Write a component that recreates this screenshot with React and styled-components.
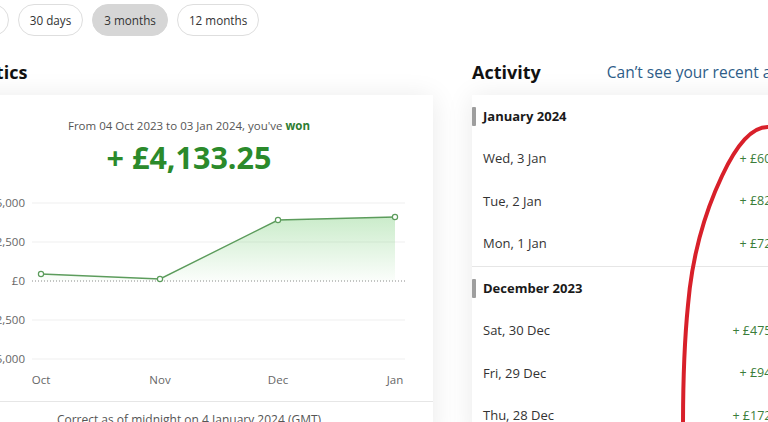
import React from "react";
import styled, { createGlobalStyle } from "styled-components";

const Global = createGlobalStyle`
  html, body { margin: 0; padding: 0; background: #ffffff; overflow: hidden; }
  body { font-family: "Open Sans", "Noto Sans", Arial, sans-serif; color: #222; }
`;

const Page = styled.div`
  margin-left: -55px;
  padding-top: 4px;
  width: 1100px;
`;

const FilterRow = styled.div`
  display: flex;
  gap: 9px;
  margin-left: 5px;
`;

const Pill = styled.button`
  height: 32px;
  padding: 0 11px;
  border-radius: 16px;
  border: 1px solid ${(p) => (p.$active ? "#d6d6d6" : "#dedede")};
  background: ${(p) => (p.$active ? "#d6d6d6" : "#ffffff")};
  font-family: inherit;
  font-size: 11.7px;
  color: #333;
`;

const Columns = styled.div`
  display: flex;
  gap: 39px;
  margin-top: 24px;
`;

const Column = styled.div`
  width: ${(p) => p.$w}px;
  flex: none;
`;

const HeadRow = styled.div`
  display: flex;
  align-items: center;
  height: 24px;
  margin-bottom: 11px;
  gap: 66px;
`;

const Heading = styled.h2`
  margin: 0;
  font-size: 18px;
  font-weight: 700;
  color: #111;
  line-height: 24px;
`;

const Link = styled.a`
  font-size: 15.5px;
  color: #2d5c88;
  text-decoration: none;
  white-space: nowrap;
`;

const Card = styled.div`
  background: #fff;
  box-shadow: 0 2px 26px rgba(0, 0, 0, 0.09);
`;

const Intro = styled.div`
  padding-top: 22px;
  text-align: center;
  font-size: 11.5px;
  line-height: 18px;
  color: #555;
  b { color: #2e7d32; font-weight: 700; }
`;

const Amount = styled.div`
  margin-top: 4px;
  text-align: center;
  font-size: 30.5px;
  line-height: 36px;
  font-weight: 700;
  color: #2b8a2b;
`;

const ChartSvg = styled.svg`
  display: block;
  margin: 15px 0 11px;
`;

const Footer = styled.div`
  border-top: 1px solid #e6e6e6;
  padding: 10px 0 12px;
  text-align: center;
  font-size: 12px;
  line-height: 16px;
  color: #555;
`;

const Group = styled.div`
  padding: 11px 0 ${(p) => (p.$last ? 0 : 1.5)}px;
  border-bottom: ${(p) => (p.$last ? "none" : "1px solid #e6e6e6")};
`;

const MonthHeader = styled.div`
  display: flex;
  align-items: center;
  gap: 7px;
  height: 20px;
  margin-bottom: 11px;
  font-size: 13px;
  font-weight: 700;
  color: #1a1a1a;
`;

const Bar = styled.span`
  width: 4px;
  height: 19px;
  border-radius: 1px;
  background: #9e9e9e;
`;

const Row = styled.div`
  display: flex;
  align-items: center;
  justify-content: space-between;
  height: 42.5px;
  padding: 0 13px 0 11px;
  font-size: 13px;
  color: #333;
`;

const Money = styled.span`
  font-size: 12.5px;
  color: #3a7d3a;
`;

const Scribble = styled.svg`
  position: fixed;
  left: 0;
  top: 0;
  pointer-events: none;
`;

const groups = [
  {
    title: "January 2024",
    rows: [
      ["Wed, 3 Jan", "+ £60.50"],
      ["Tue, 2 Jan", "+ £82.00"],
      ["Mon, 1 Jan", "+ £72.10"],
    ],
  },
  {
    title: "December 2023",
    rows: [
      ["Sat, 30 Dec", "+ £475.00"],
      ["Fri, 29 Dec", "+ £94.20"],
      ["Thu, 28 Dec", "+ £172.40"],
    ],
  },
];

const gridY = [
  [13, "£5,000"],
  [52, "£2,500"],
  [91, "£0"],
  [130, "-£2,500"],
  [169, "-£5,000"],
];
const pts = [
  [96, 84, "Oct"],
  [215, 89, "Nov"],
  [333, 30, "Dec"],
  [450, 27, "Jan"],
];

function Chart() {
  const line = pts.map((p, i) => `${i ? "L" : "M"}${p[0]} ${p[1]}`).join(" ");
  const area = `${line} L450 91 L96 91 Z`;
  return (
    <ChartSvg width="488" height="200" viewBox="0 0 488 200">
      <defs>
        <linearGradient id="fillG" x1="0" y1="27" x2="0" y2="91" gradientUnits="userSpaceOnUse">
          <stop offset="0" stopColor="#7ccf7c" stopOpacity="0.4" />
          <stop offset="1" stopColor="#7ccf7c" stopOpacity="0.03" />
        </linearGradient>
      </defs>
      {gridY.map(([y, label]) => (
        <g key={label}>
          <line
            x1="87"
            x2="460"
            y1={y}
            y2={y}
            stroke={y === 91 ? "#8a8a8a" : "#efefef"}
            strokeDasharray={y === 91 ? "1 2" : undefined}
            strokeWidth="1"
          />
          <text x="80" y={y + 4} textAnchor="end" fontSize="11.5" fill="#666" fontFamily="Open Sans, sans-serif">
            {label}
          </text>
        </g>
      ))}
      <path d={area} fill="url(#fillG)" />
      <path d={line} fill="none" stroke="#5c9c5c" strokeWidth="1.4" />
      {pts.map(([x, y, m]) => (
        <g key={m}>
          <circle cx={x} cy={y} r="2.6" fill="#fff" stroke="#5c9c5c" strokeWidth="1.2" />
          <text x={x} y="194" textAnchor="middle" fontSize="11.5" fill="#666" fontFamily="Open Sans, sans-serif">
            {m}
          </text>
        </g>
      ))}
    </ChartSvg>
  );
}

export default function App() {
  return (
    <>
      <Global />
      <Page>
        <FilterRow>
          <Pill>7 days</Pill>
          <Pill>30 days</Pill>
          <Pill $active>3 months</Pill>
          <Pill>12 months</Pill>
        </FilterRow>
        <Columns>
          <Column $w={488}>
            <HeadRow>
              <Heading>Statistics</Heading>
            </HeadRow>
            <Card>
              <Intro>
                From 04 Oct 2023 to 03 Jan 2024, you've <b>won</b>
              </Intro>
              <Amount>+ £4,133.25</Amount>
              <Chart />
              <Footer>Correct as of midnight on 4 January 2024 (GMT)</Footer>
            </Card>
          </Column>
          <Column $w={330}>
            <HeadRow>
              <Heading>Activity</Heading>
              <Link href="#">Can’t see your recent activity?</Link>
            </HeadRow>
            <Card>
              {groups.map((g, gi) => (
                <Group key={g.title} $last={gi === groups.length - 1}>
                  <MonthHeader>
                    <Bar />
                    {g.title}
                  </MonthHeader>
                  {g.rows.map(([d, a]) => (
                    <Row key={d}>
                      <span>{d}</span>
                      <Money>{a}</Money>
                    </Row>
                  ))}
                </Group>
              ))}
            </Card>
          </Column>
        </Columns>
      </Page>
      <Scribble width="768" height="422" viewBox="0 0 768 422">
        <path
          d="M774 128 C754 122 736 146 722 176 C704 214 692 258 688 305 C684 345 683 390 683 426"
          fill="none"
          stroke="#d8202a"
          strokeWidth="4"
          strokeLinecap="round"
        />
      </Scribble>
    </>
  );
}
